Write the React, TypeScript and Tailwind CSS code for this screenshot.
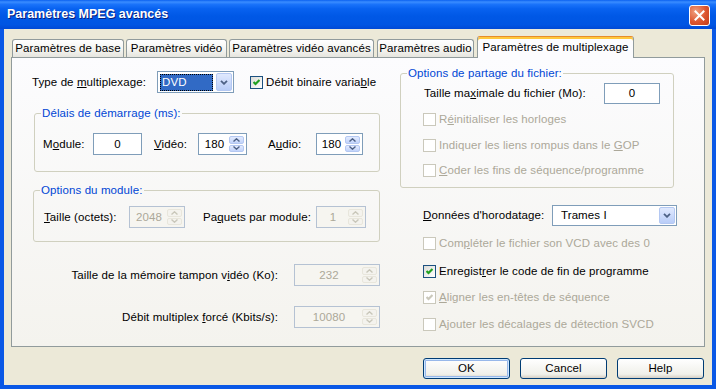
import React from "react";

const font = "font-['Liberation_Sans',Arial,sans-serif]";

interface CheckProps {
  checked?: boolean;
  disabled?: boolean;
  children: React.ReactNode;
}

const Check = ({ checked, disabled, children }: CheckProps) => (
  <div className={`flex h-[16px] items-center ${disabled ? "text-[#ACA899]" : "text-black"}`}>
    <div
      className={`flex h-[13px] w-[13px] shrink-0 items-center justify-center border ${
        disabled ? "border-[#CAC8BB] bg-white" : "border-[#1C5180] bg-[linear-gradient(135deg,#DCDCD7,#FFFFFF)]"
      }`}
    >
      {checked && (
        <svg width="7" height="7" viewBox="0 0 7 7">
          <path d="M0.5 3 L2.5 5 L6.5 1" fill="none" stroke={disabled ? "#CAC8BB" : "#21A121"} strokeWidth="2.2" />
        </svg>
      )}
    </div>
    <span className="ml-[3px]">{children}</span>
  </div>
);

const SpinBtn = ({ up, disabled }: { up?: boolean; disabled?: boolean }) => (
  <div
    className={`flex flex-1 items-center justify-center rounded-[2px] border ${
      disabled ? "border-[#E8E6DC] bg-[#F4F3EE]" : "border-[#B4C8F2] bg-[linear-gradient(to_bottom,#E3EBFE,#C1D3FA)]"
    }`}
  >
    <svg width="7" height="4" viewBox="0 0 7 4">
      <path
        d={up ? "M0.5 3.5 L3.5 0.8 L6.5 3.5" : "M0.5 0.5 L3.5 3.2 L6.5 0.5"}
        fill="none"
        stroke={disabled ? "#C9C7BA" : "#4D6185"}
        strokeWidth="1.4"
      />
    </svg>
  </div>
);

interface SpinProps {
  value: string;
  w: string;
  disabled?: boolean;
}

const Spin = ({ value, w, disabled }: SpinProps) => (
  <div
    className={`flex h-[22px] ${w} items-stretch border py-[2px] pl-[1px] pr-[2px] ${
      disabled ? "border-[#B5C2D3] bg-[#F6F5F0] text-[#ACA899]" : "border-[#7F9DB9] bg-white"
    }`}
  >
    <div className="flex flex-1 items-center justify-center">{value}</div>
    <div className="flex w-[15px] flex-col gap-[1px]">
      <SpinBtn up disabled={disabled} />
      <SpinBtn disabled={disabled} />
    </div>
  </div>
);

const DropBtn = () => (
  <div className="flex w-[16px] items-center justify-center rounded-[2px] border border-[#B4C8F2] bg-[linear-gradient(to_bottom,#E0E9FE,#B9CDF8)]">
    <svg width="8" height="5" viewBox="0 0 8 5">
      <path d="M1 0.8 L4 3.8 L7 0.8" fill="none" stroke="#4D6185" strokeWidth="1.8" />
    </svg>
  </div>
);

const tabs = [
  { label: "Paramètres de base", w: "w-[112px] mr-[2px]" },
  { label: "Paramètres vidéo", w: "w-[101px] mr-[2px]" },
  { label: "Paramètres vidéo avancés", w: "w-[145px] mr-[3px]" },
  { label: "Paramètres audio", w: "w-[97px] mr-[3px]" },
];

export default function App() {
  return (
    <div className={`flex h-[389px] w-[716px] flex-col overflow-hidden bg-[#0A58E6] text-[11.5px] leading-[13px] tracking-[0.1px] text-black ${font}`}>
      {/* title bar */}
      <div className="flex h-[29px] shrink-0 bg-[linear-gradient(to_bottom,#0B61F0_0%,#3A8DFF_7%,#1A73FA_15%,#0862F0_30%,#0058E6_55%,#0055E3_85%,#0049D6_100%)] pl-[7px] pr-[6px]">
        <span className="self-center text-[12.5px] font-bold tracking-normal text-white [text-shadow:1px_1px_0_#0A1E7A]">
          Paramètres MPEG avancés
        </span>
        <div className="ml-auto mt-[5px] flex h-[21px] w-[21px] items-center justify-center rounded-[3px] border border-white bg-[radial-gradient(circle_at_30%_30%,#F0A080,#DC5530_55%,#C23C18)]">
          <svg width="11" height="11" viewBox="0 0 11 11">
            <path d="M1.5 1.5 L9.5 9.5 M9.5 1.5 L1.5 9.5" stroke="white" strokeWidth="2" strokeLinecap="square" />
          </svg>
        </div>
      </div>

      <div className="mx-[4px] mb-[4px] flex flex-1 flex-col bg-[#ECE9D8]">
        {/* tabs */}
        <div className="flex h-[28px] items-end pl-[8px]">
          {tabs.map((t) => (
            <div
              key={t.label}
              className={`flex h-[18px] ${t.w} items-center justify-center rounded-t-[3px] border border-b-0 border-[#919B9C] bg-[linear-gradient(to_bottom,#FFFFFF,#F3F3EF_60%,#E6E5DE)]`}
            >
              {t.label}
            </div>
          ))}
          <div className="relative z-10 -mb-[1px] flex h-[22px] w-[157px] items-center justify-center rounded-t-[3px] border border-b-0 border-[#919B9C] border-t-[#E68B2C] bg-[#FCFCFE] pb-[1px] shadow-[inset_0_2px_0_#FFC83C]">
            Paramètres de multiplexage
          </div>
        </div>

        {/* tab page */}
        <div className="ml-[7px] flex h-[290px] w-[694px] border border-[#919B9C] bg-[linear-gradient(to_bottom,#FCFCFE,#F4F3EE)]">
          {/* left column */}
          <div className="ml-[20px] flex w-[348px] flex-col">
            <div className="mt-[13px] flex h-[22px] items-center">
              <span className="w-[125px]">
                Type de <u>m</u>ultiplexage:
              </span>
              <div className="flex h-[22px] w-[77px] border border-[#7F9DB9] bg-white p-[1px]">
                <div className="flex flex-1 items-center pl-[1px] pr-[3px]">
                  <span className="flex h-[17px] flex-1 items-center bg-[#316AC5] px-[2px] text-white outline-1 -outline-offset-1 outline-dotted outline-black">
                    DVD
                  </span>
                </div>
                <DropBtn />
              </div>
              <div className="ml-[16px]">
                <Check checked>
                  Débit binaire varia<u>b</u>le
                </Check>
              </div>
            </div>

            <fieldset className="ml-[2px] mt-[14px] w-[346px] rounded-[3px] border border-[#D0D0BF] pb-[16px] pt-[13px]">
              <legend className="ml-[6px] px-[1px] text-[#0046D5]">Délais de démarrage (ms):</legend>
              <div className="flex h-[22px] items-center pl-[8px]">
                <span className="w-[50px]">
                  M<u>o</u>dule:
                </span>
                <div className="flex h-[22px] w-[49px] items-center justify-center border border-[#7F9DB9] bg-white">0</div>
                <span className="ml-[12px] w-[44px]">
                  <u>V</u>idéo:
                </span>
                <Spin value="180" w="w-[49px]" />
                <span className="ml-[21px] w-[48px]">
                  A<u>u</u>dio:
                </span>
                <Spin value="180" w="w-[47px]" />
              </div>
            </fieldset>

            <fieldset className="ml-[1px] mt-[12px] w-[347px] rounded-[3px] border border-[#D0D0BF] pb-[13px] pt-[9px]">
              <legend className="ml-[6px] px-[1px] text-[#0046D5]">Options du module:</legend>
              <div className="flex h-[22px] items-center pl-[10px]">
                <span className="w-[85px]">
                  <u>T</u>aille (octets):
                </span>
                <Spin value="2048" w="w-[56px]" disabled />
                <span className="ml-[18px] w-[113px]">
                  Pa<u>q</u>uets par module:
                </span>
                <Spin value="1" w="w-[50px]" disabled />
              </div>
            </fieldset>

            <div className="mt-[22px] flex h-[22px] items-center">
              <span className="w-[246px] text-right">
                Taille de la mémoire tampon v<u>i</u>déo (Ko):
              </span>
              <div className="ml-[16px]">
                <Spin value="232" w="w-[86px]" disabled />
              </div>
            </div>
            <div className="mt-[20px] flex h-[22px] items-center">
              <span className="w-[246px] text-right">
                Débit multiplex <u>f</u>orcé (Kbits/s):
              </span>
              <div className="ml-[16px]">
                <Spin value="10080" w="w-[86px]" disabled />
              </div>
            </div>
          </div>

          {/* right column */}
          <div className="ml-[20px] flex w-[277px] flex-col">
            <fieldset className="mt-[9px] w-[274px] rounded-[3px] border border-[#D0D0BF] pb-[9px] pt-[3px]">
              <legend className="ml-[6px] px-[1px] text-[#0046D5]">Options de partage du fichier:</legend>
              <div className="flex h-[21px] items-center pl-[23px]">
                <span className="w-[180px]">
                  Taille ma<u>x</u>imale du fichier (Mo):
                </span>
                <div className="flex h-[21px] w-[56px] items-center justify-center border border-[#7F9DB9] bg-white">0</div>
              </div>
              <div className="flex flex-col pl-[22px]">
                <div className="mt-[7px]">
                  <Check disabled>
                    R<u>é</u>initialiser les horloges
                  </Check>
                </div>
                <div className="mt-[10px]">
                  <Check disabled>
                    Indiquer les liens rompus dans le <u>G</u>OP
                  </Check>
                </div>
                <div className="mt-[9px]">
                  <Check disabled>
                    <u>C</u>oder les fins de séquence/programme
                  </Check>
                </div>
              </div>
            </fieldset>

            <div className="mt-[17px] flex h-[21px] items-center pl-[23px]">
              <span className="w-[129px]">
                <u>D</u>onnées d'horodatage:
              </span>
              <div className="flex h-[21px] w-[125px] border border-[#7F9DB9] bg-white p-[1px]">
                <span className="flex flex-1 items-center pl-[7px]">Trames I</span>
                <DropBtn />
              </div>
            </div>
            <div className="flex flex-col pl-[23px]">
              <div className="mt-[9px]">
                <Check disabled>
                  Com<u>p</u>léter le fichier son VCD avec des 0
                </Check>
              </div>
              <div className="mt-[12px]">
                <Check checked>
                  Enregist<u>r</u>er le code de fin de programme
                </Check>
              </div>
              <div className="mt-[10px]">
                <Check checked disabled>
                  <u>A</u>ligner les en-têtes de séquence
                </Check>
              </div>
              <div className="mt-[11px]">
                <Check disabled>
                  A<u>j</u>outer les décalages de détection SVCD
                </Check>
              </div>
            </div>
          </div>
        </div>

        {/* buttons */}
        <div className="mt-[11px] flex justify-end gap-[10px] pr-[8px]">
          <div className="flex h-[21px] w-[87px] items-center justify-center rounded-[3px] border border-[#003C74] bg-[linear-gradient(to_bottom,#FFFFFF,#F0F0EA_80%,#D6D0C5)] shadow-[inset_0_0_0_1px_#CEE7FF,inset_0_0_0_2px_#98B8EA]">
            OK
          </div>
          <div className="flex h-[21px] w-[87px] items-center justify-center rounded-[3px] border border-[#003C74] bg-[linear-gradient(to_bottom,#FFFFFF,#F0F0EA_80%,#D6D0C5)]">
            Cancel
          </div>
          <div className="flex h-[21px] w-[87px] items-center justify-center rounded-[3px] border border-[#003C74] bg-[linear-gradient(to_bottom,#FFFFFF,#F0F0EA_80%,#D6D0C5)]">
            Help
          </div>
        </div>
      </div>
    </div>
  );
}
